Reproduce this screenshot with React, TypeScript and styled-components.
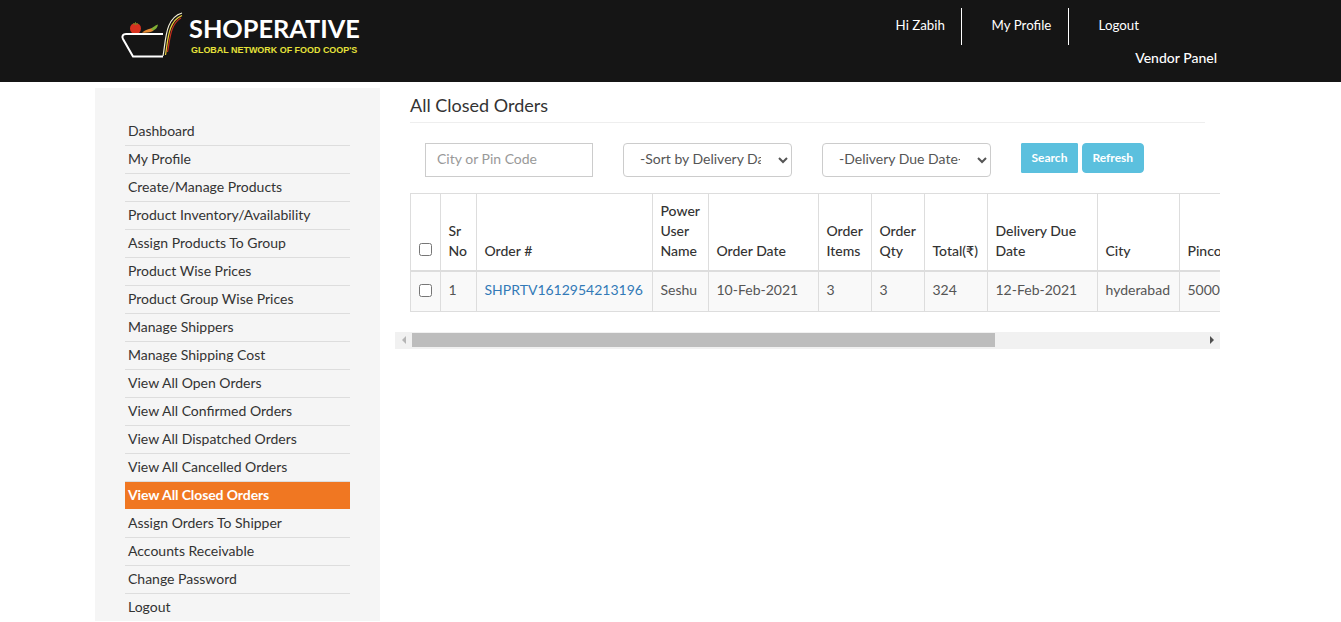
import styled, { createGlobalStyle } from 'styled-components';

const menuItems = [
  'Dashboard',
  'My Profile',
  'Create/Manage Products',
  'Product Inventory/Availability',
  'Assign Products To Group',
  'Product Wise Prices',
  'Product Group Wise Prices',
  'Manage Shippers',
  'Manage Shipping Cost',
  'View All Open Orders',
  'View All Confirmed Orders',
  'View All Dispatched Orders',
  'View All Cancelled Orders',
  'View All Closed Orders',
  'Assign Orders To Shipper',
  'Accounts Receivable',
  'Change Password',
  'Logout',
];

const columnWidths = [30, 36, 176, 56, 110, 53, 53, 63, 110, 82, 80];

const headings = [
  'Sr No',
  'Order #',
  'Power User Name',
  'Order Date',
  'Order Items',
  'Order Qty',
  'Total(₹)',
  'Delivery Due Date',
  'City',
  'Pincode',
];

export default function App() {
  return (
    <>
      <GlobalStyle />
      <Page>
        <Header>
          <Logo>
            <LogoMark />
            <LogoText>
              <LogoName>SHOPERATIVE</LogoName>
              <LogoTagline>GLOBAL NETWORK OF FOOD COOP'S</LogoTagline>
            </LogoText>
          </Logo>
          <HeaderRight>
            <TopNav>
              <TopNavItem $width={66}>Hi Zabih</TopNavItem>
              <TopNavItem $width={77}>My Profile</TopNavItem>
              <div>Logout</div>
            </TopNav>
            <PanelName>Vendor Panel</PanelName>
          </HeaderRight>
        </Header>

        <Body>
          <Sidebar>
            {menuItems.map((item) => (
              <MenuItem key={item} $active={item === 'View All Closed Orders'}>
                {item}
              </MenuItem>
            ))}
          </Sidebar>

          <Main>
            <Title>All Closed Orders</Title>
            <Filters>
              <TextInput placeholder="City or Pin Code" />
              <Select defaultValue="sort">
                <option value="sort">-Sort by Delivery Date-</option>
              </Select>
              <Select defaultValue="due">
                <option value="due">-Delivery Due Date-</option>
              </Select>
              <Buttons>
                <InfoButton $radius={1}>Search</InfoButton>
                <InfoButton $radius={4}>Refresh</InfoButton>
              </Buttons>
            </Filters>

            <TableClip>
              <Table>
                <colgroup>
                  {columnWidths.map((w, i) => (
                    <Col key={i} $width={w} />
                  ))}
                </colgroup>
                <thead>
                  <tr>
                    <Th>
                      <HeadCheck type="checkbox" />
                    </Th>
                    {headings.map((h) => (
                      <Th key={h}>{h}</Th>
                    ))}
                  </tr>
                </thead>
                <tbody>
                  <tr>
                    <Td>
                      <Check type="checkbox" />
                    </Td>
                    <Td>1</Td>
                    <Td>
                      <OrderLink href="#">SHPRTV1612954213196</OrderLink>
                    </Td>
                    <Td>Seshu</Td>
                    <Td>10-Feb-2021</Td>
                    <Td>3</Td>
                    <Td>3</Td>
                    <Td>324</Td>
                    <Td>12-Feb-2021</Td>
                    <Td>hyderabad</Td>
                    <Td>500001</Td>
                  </tr>
                </tbody>
              </Table>
            </TableClip>

            <ScrollTrack>
              <ScrollButton>
                <ArrowLeft />
              </ScrollButton>
              <ScrollThumb />
              <ScrollRest />
              <ScrollButton>
                <ArrowRight />
              </ScrollButton>
            </ScrollTrack>
          </Main>
        </Body>
      </Page>
    </>
  );
}

function LogoMark() {
  return (
    <svg width="66" height="50" viewBox="0 0 66 50" fill="none">
      <circle cx="16.500" cy="18.500" r="5.500" fill="#d8321f" />
      <path d="M14 13.500l2.500 1 2.500-1M16.500 14v-2" stroke="#5f9a2a" strokeWidth="0.800" />
      <path d="M23 22.500c4-3 8-4.500 13-4.500l-2 3c-3 1.500-7 2-11 1.500z" fill="#e58a34" />
      <path d="M32 19c2-2 4-3.500 7-4.500-.5 3-2 5-5 6z" fill="#7fae35" />
      <path d="M44 24H7c-3 0-4.500 2-3 5L14 46.500h30" stroke="#fff" strokeWidth="2" strokeLinejoin="round" />
      <path d="M44 46C47 30 46 8 63 3" stroke="#f4f1d8" strokeWidth="1.200" />
      <path d="M46.500 45C49 30 49 11 63 5.500" stroke="#f0d23a" strokeWidth="1.200" />
      <path d="M48.500 42C51 30 51 14 62 8" stroke="#c9301e" strokeWidth="1.200" />
    </svg>
  );
}

const GlobalStyle = createGlobalStyle`
  html, body {
    margin: 0;
    height: 100%;
    overflow: hidden;
    background: #fff;
  }
  * {
    box-sizing: border-box;
  }
  body {
    font-family: Lato, "Liberation Sans", sans-serif;
    font-size: 14px;
    color: #333;
  }
`;

const Page = styled.div`
  height: 100vh;
  display: flex;
  flex-direction: column;
  overflow: hidden;
`;

const Header = styled.header`
  flex: none;
  height: 82px;
  background: #151515;
  display: flex;
  justify-content: space-between;
  padding: 0 124px 0 119px;
`;

const Logo = styled.div`
  display: flex;
  align-items: flex-start;
  padding-top: 10px;
`;

const LogoText = styled.div`
  display: flex;
  flex-direction: column;
  margin-left: 4px;
  padding-top: 3px;
`;

const LogoName = styled.div`
  font-size: 25.300px;
  line-height: 30px;
  font-weight: 700;
  color: #fff;
`;

const LogoTagline = styled.div`
  font-family: "Liberation Sans", Arial, sans-serif;
  font-size: 8.950px;
  line-height: 11px;
  font-weight: 700;
  color: #e6e23a;
  margin-top: 2px;
  padding-left: 2px;
  white-space: nowrap;
`;

const HeaderRight = styled.div`
  display: flex;
  flex-direction: column;
  align-items: flex-end;
  padding-top: 8px;
`;

const TopNav = styled.nav`
  display: flex;
  height: 37px;
  margin-right: 78px;
  color: #fff;
  font-size: 13.300px;
  line-height: 35px;
`;

const TopNavItem = styled.div<{ $width: number }>`
  width: ${(p) => p.$width}px;
  border-right: 1px solid #fff;
  margin-right: 30px;
`;

const PanelName = styled.div`
  color: #fff;
  line-height: 20px;
  margin-top: 3px;
  font-weight: 500;
`;

const Body = styled.div`
  flex: 1;
  display: flex;
  min-height: 0;
  padding: 6px 121px 1px 95px;
`;

const Sidebar = styled.aside`
  flex: none;
  width: 285px;
  background: #f5f5f5;
  padding: 30px 30px 0;
  display: flex;
  flex-direction: column;
`;

const MenuItem = styled.div<{ $active: boolean }>`
  flex: none;
  height: 28px;
  line-height: 25px;
  padding-left: 3px;
  border-bottom: 1px solid ${(p) => (p.$active ? '#f5f5f5' : '#ddd')};
  background: ${(p) => (p.$active ? '#f07722' : 'transparent')};
  color: ${(p) => (p.$active ? '#fff' : '#333')};
  font-weight: ${(p) => (p.$active ? 700 : 400)};
  letter-spacing: ${(p) => (p.$active ? '-0.1px' : '0')};

  &:last-child {
    border-bottom: 0;
  }
`;

const Main = styled.main`
  flex: 1;
  min-width: 0;
  padding-left: 15px;
`;

const Title = styled.h1`
  margin: 0 15px;
  height: 35px;
  font-size: 18px;
  line-height: 34px;
  font-weight: 400;
  color: #333;
  border-bottom: 1px solid #eee;
`;

const Filters = styled.div`
  display: flex;
  align-items: flex-start;
  gap: 30px;
  padding: 20px 0 0 30px;
  height: 70px;
`;

const TextInput = styled.input`
  width: 168px;
  height: 34px;
  padding: 4px 11px 8px;
  border: 1px solid #ccc;
  border-radius: 0;
  font: inherit;
  color: #555;
  outline: none;

  &::placeholder {
    color: #999;
  }
`;

const Select = styled.select`
  width: 169px;
  height: 34px;
  padding: 4px 14px 8px 12px;
  border: 1px solid #ccc;
  border-radius: 4px;
  background: #fff;
  font: inherit;
  color: #555;
`;

const Buttons = styled.div`
  display: flex;
  gap: 4px;
`;

const InfoButton = styled.button<{ $radius: number }>`
  height: 30px;
  padding: 0 9.500px 2px;
  border: 1px solid #5bc0de;
  border-radius: ${(p) => p.$radius}px;
  background: #5bc0de;
  color: #fff;
  font-family: inherit;
  font-size: 12px;
  font-weight: 700;
`;

const TableClip = styled.div`
  padding-left: 15px;
  overflow: hidden;
`;

const Table = styled.table`
  width: 849px;
  table-layout: fixed;
  border-collapse: collapse;
  margin-bottom: 20px;
`;

const Col = styled.col<{ $width: number }>`
  width: ${(p) => p.$width}px;
`;

const Th = styled.th`
  padding: 7px 7.500px 9px;
  border: 1px solid #ddd;
  border-bottom-width: 2px;
  vertical-align: bottom;
  text-align: left;
  font-weight: 500;
  line-height: 20px;
  color: #333;
`;

const Td = styled.td`
  height: 40px;
  padding: 7px 7.500px 9px;
  border: 1px solid #ddd;
  background: #f9f9f9;
  line-height: 20px;
  color: #555;
  white-space: nowrap;
`;

const Check = styled.input`
  display: block;
  width: 13px;
  height: 13px;
  margin: 1px 0 0;
`;

const HeadCheck = styled(Check)`
  margin: 0 0 5px;
`;

const OrderLink = styled.a`
  color: #337ab7;
  text-decoration: none;
`;

const ScrollTrack = styled.div`
  display: flex;
  height: 17px;
  background: #f1f1f1;
`;

const ScrollButton = styled.div`
  flex: none;
  width: 17px;
  display: flex;
  align-items: center;
  justify-content: center;
`;

const ScrollThumb = styled.div`
  flex: none;
  width: 583px;
  margin: 1px 0 2px;
  background: #bdbdbd;
`;

const ScrollRest = styled.div`
  flex: 1;
`;

const ArrowLeft = styled.span`
  border-style: solid;
  border-width: 4px 4px 4px 0;
  border-color: transparent #b5b5b5 transparent transparent;
`;

const ArrowRight = styled.span`
  border-style: solid;
  border-width: 4px 0 4px 4px;
  border-color: transparent transparent transparent #505050;
`;
